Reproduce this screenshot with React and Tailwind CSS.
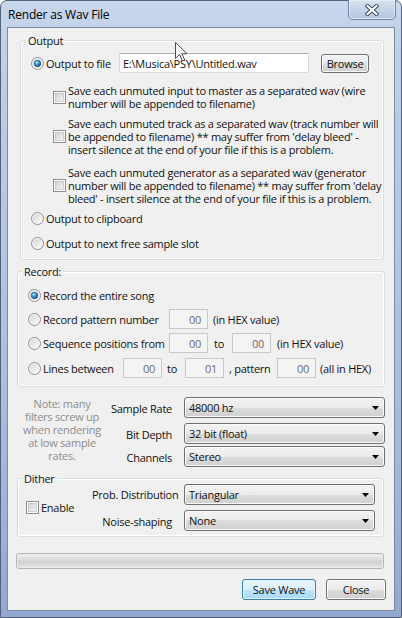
import React from "react";

function Radio({ checked }) {
  return (
    <svg width="13" height="13" viewBox="0 0 13 13" className="shrink-0 block">
      <defs>
        <linearGradient id="rbg" x1="0" y1="0" x2="1" y2="1">
          <stop offset="0" stopColor="#d6d6d6" />
          <stop offset="1" stopColor="#fcfcfc" />
        </linearGradient>
        <radialGradient id="rdot" cx="0.4" cy="0.35" r="0.7">
          <stop offset="0" stopColor="#b5e6ff" />
          <stop offset="0.45" stopColor="#3d97dc" />
          <stop offset="1" stopColor="#173f6b" />
        </radialGradient>
      </defs>
      <circle cx="6.5" cy="6.5" r="6" fill="#f6f6f6" stroke="#8e8f8f" strokeWidth="1" />
      <circle cx="6.5" cy="6.5" r="4.6" fill="url(#rbg)" />
      {checked && <circle cx="6.5" cy="6.5" r="3.3" fill="url(#rdot)" stroke="#1c4f80" strokeWidth="0.6" />}
    </svg>
  );
}

function Check() {
  return (
    <svg width="13" height="13" viewBox="0 0 13 13" className="shrink-0 block">
      <defs>
        <linearGradient id="cbg" x1="0" y1="0" x2="1" y2="1">
          <stop offset="0" stopColor="#cbcfd5" />
          <stop offset="1" stopColor="#f7f7f7" />
        </linearGradient>
      </defs>
      <rect x="0.5" y="0.5" width="12" height="12" fill="#ffffff" stroke="#8e8f8f" />
      <rect x="2.5" y="2.5" width="8" height="8" fill="url(#cbg)" stroke="#aeb3b9" strokeWidth="0.6" />
    </svg>
  );
}

function Combo({ value, className }) {
  return (
    <div
      className={
        "flex items-center h-[21px] rounded-[3px] border border-[#707070] bg-[linear-gradient(#f3f3f3_0%,#ebebeb_50%,#dddddd_50%,#d0d0d0_100%)] shadow-[inset_0_0_0_1px_#fbfbfb] pl-[4px] pr-[5px] " +
        className
      }
    >
      <span className="flex-1 whitespace-nowrap">{value}</span>
      <svg width="7" height="4" viewBox="0 0 7 4" className="block">
        <path d="M0 0H7L3.5 4Z" fill="#000" />
      </svg>
    </div>
  );
}

function Btn({ children, className, def }) {
  return (
    <div
      className={
        "flex items-center justify-center rounded-[3px] border whitespace-nowrap " +
        (def
          ? "border-[#3c7fb1] bg-[linear-gradient(#eaf6fd_0%,#d9f0fc_50%,#bee6fd_50%,#a7d9f5_100%)] shadow-[inset_0_0_0_1px_#e6f5fd] "
          : "border-[#707070] bg-[linear-gradient(#f2f2f2_0%,#ebebeb_50%,#dddddd_50%,#cfcfcf_100%)] shadow-[inset_0_0_0_1px_#fbfbfb] ") +
        className
      }
    >
      {children}
    </div>
  );
}

function Hex({ value, className }) {
  return (
    <div
      className={
        "h-[20px] w-[39px] border border-[#c9c9c9] bg-[#f4f4f4] flex items-center justify-end pr-[6px] text-[#6d6d6d] " +
        (className || "")
      }
    >
      {value}
    </div>
  );
}

function Group({ label, labelLeft, className, children }) {
  return (
    <div
      className={
        "relative rounded-[3px] border border-[#d5dfe5] shadow-[inset_0_0_0_1px_#ffffff] " + className
      }
    >
      <span className={"absolute -top-[7px] px-[2px] bg-[#f0f0f0] leading-[13px] " + labelLeft}>{label}</span>
      {children}
    </div>
  );
}

function CloseX() {
  return (
    <div className="-mt-[1px] mr-[5px] w-[48px] h-[20px] rounded-b-[5px] border border-t-0 border-[#6f83a6] bg-[linear-gradient(#d9e3f1_0%,#c6d3e7_50%,#b4c5df_100%)] shadow-[inset_0_0_0_1px_#e4ebf5] flex items-center justify-center">
      <svg width="14" height="12" viewBox="0 0 14 12" className="block">
        <path d="M2.5 2 L11.5 10 M11.5 2 L2.5 10" stroke="#3a4659" strokeWidth="4" strokeLinecap="square" />
        <path d="M2.5 2 L11.5 10 M11.5 2 L2.5 10" stroke="#ffffff" strokeWidth="2.2" strokeLinecap="square" />
      </svg>
    </div>
  );
}

function Cursor() {
  return (
    <svg width="14" height="22" viewBox="0 0 14 22" className="absolute left-[175px] top-[42px] block">
      <path
        d="M0.5 0.5 L0.5 16.5 L4.5 12.5 L7.5 19 L9.8 18 L6.8 11.8 L12 11.8 Z"
        fill="#f7f7f7"
        stroke="#4a4a4a"
        strokeWidth="1"
        strokeLinejoin="round"
      />
    </svg>
  );
}

const NOTE = ["Note: many", "filters screw up", "when rendering", "at low sample", "rates."];

export default function App() {
  return (
    <div className="relative w-[402px] h-[618px] bg-white font-['Open_Sans','Noto_Sans',sans-serif] text-[11px] tracking-[-0.25px] leading-[13px] text-[#111]">
      <div className="w-[402px] h-[618px] flex flex-col rounded-t-[7px] border border-[#52637b] bg-[linear-gradient(180deg,#c8d7ec_0%,#bfcfe7_8%,#b3c6e2_40%,#a3b8db_75%,#91a8d1_100%)]">
        {/* Title bar */}
        <div className="h-[26px] shrink-0 flex items-start justify-between">
          <div className="pl-[7px] pt-[6px] text-[12px] tracking-[-0.2px] leading-[16px] text-black">Render as Wav File</div>
          <CloseX />
        </div>

        {/* Client area */}
        <div className="flex-1 mx-[6px] mb-[6px] border border-[#7b8aa1] bg-[#f0f0f0] flex flex-col">
          {/* Output group */}
          <Group label="Output" labelLeft="left-[5px]" className="ml-[12px] mt-[12px] w-[364px] h-[220px] flex flex-col pl-[10px] pt-[12px]">
            <div className="flex items-center h-[20px]">
              <Radio checked />
              <span className="ml-[2px] w-[73px] whitespace-nowrap">Output to file</span>
              <div className="w-[190px] h-[20px] bg-white border border-[#d6dbe2] border-t-[#abadb3] flex items-center pl-[3px] whitespace-nowrap">
                {"E:\\Musica\\PSY\\Untitled.wav"}
              </div>
              <Btn className="ml-[12px] w-[48px] h-[19px]">Browse</Btn>
            </div>

            <div className="flex items-center ml-[22px] mt-[11px]">
              <Check />
              <span className="ml-[2px] whitespace-nowrap">
                Save each unmuted input to master as a separated wav (wire
                <br />
                number will be appended to filename)
              </span>
            </div>

            <div className="flex items-center ml-[22px] mt-[7px]">
              <Check />
              <span className="ml-[2px] whitespace-nowrap">
                Save each unmuted track as a separated wav (track number will
                <br />
                be appended to filename) ** may suffer from 'delay bleed' -
                <br />
                insert silence at the end of your file if this is a problem.
              </span>
            </div>

            <div className="flex items-center ml-[22px] mt-[10px]">
              <Check />
              <span className="ml-[2px] whitespace-nowrap">
                Save each unmuted generator as a separated wav (generator
                <br />
                number will be appended to filename) ** may suffer from 'delay
                <br />
                bleed' - insert silence at the end of your file if this is a problem.
              </span>
            </div>

            <div className="flex items-center h-[14px] mt-[6px]">
              <Radio />
              <span className="ml-[2px]">Output to clipboard</span>
            </div>
            <div className="flex items-center h-[14px] mt-[11px]">
              <Radio />
              <span className="ml-[2px]">Output to next free sample slot</span>
            </div>
          </Group>

          {/* Record group */}
          <Group label="Record:" labelLeft="left-[4px]" className="ml-[9px] mt-[11px] w-[368px] h-[116px] flex flex-col pl-[10px] pt-[13px]">
            <div className="flex items-center h-[20px]">
              <Radio checked />
              <span className="ml-[2px]">Record the entire song</span>
            </div>
            <div className="flex items-center h-[20px] mt-[4px]">
              <Radio />
              <span className="ml-[2px] w-[126px] whitespace-nowrap">Record pattern number</span>
              <Hex value="00" />
              <span className="ml-[5px]">(in HEX value)</span>
            </div>
            <div className="flex items-center h-[20px] mt-[4px]">
              <Radio />
              <span className="ml-[2px] w-[126px] whitespace-nowrap">Sequence positions from</span>
              <Hex value="00" />
              <span className="w-[24px] pl-[6px]">to</span>
              <Hex value="00" />
              <span className="ml-[6px]">(in HEX value)</span>
            </div>
            <div className="flex items-center h-[20px] mt-[5px]">
              <Radio />
              <span className="ml-[2px] w-[80px] whitespace-nowrap">Lines between</span>
              <Hex value="00" />
              <span className="w-[23px] pl-[5px]">to</span>
              <Hex value="01" />
              <span className="w-[53px] pl-[5px] whitespace-nowrap">, pattern</span>
              <Hex value="00" />
              <span className="ml-[4px] whitespace-nowrap">(all in HEX)</span>
            </div>
          </Group>

          {/* Format section */}
          <div className="flex mt-[10px] h-[70px]">
            <div className="ml-[10px] w-[88px] flex flex-col items-center text-[#8d8d8d]">
              {NOTE.map((l) => (
                <div key={l} className="h-[13px] leading-[13px] whitespace-nowrap">
                  {l}
                </div>
              ))}
            </div>
            <div className="flex flex-col">
              <div className="flex items-start">
                <span className="w-[66px] text-right pt-[5px] whitespace-nowrap">Sample Rate</span>
                <Combo value="48000 hz" className="ml-[12px] w-[201px]" />
              </div>
              <div className="flex items-start mt-[5px]">
                <span className="w-[66px] text-right pt-[5px] whitespace-nowrap">Bit Depth</span>
                <Combo value="32 bit (float)" className="ml-[12px] w-[201px]" />
              </div>
              <div className="flex items-start mt-[2px]">
                <span className="w-[66px] text-right pt-[5px] whitespace-nowrap">Channels</span>
                <Combo value="Stereo" className="ml-[12px] w-[201px]" />
              </div>
            </div>
          </div>

          {/* Dither group */}
          <Group label="Dither" labelLeft="left-[4px]" className="ml-[9px] mt-[11px] w-[367px] h-[59px] flex items-center pl-[8px]">
            <div className="w-[66px] flex items-center">
              <Check />
              <span className="ml-[2px]">Enable</span>
            </div>
            <div className="flex flex-col">
              <div className="flex items-start">
                <span className="w-[80px] text-right pt-[4px] whitespace-nowrap">Prob. Distribution</span>
                <Combo value="Triangular" className="ml-[12px] w-[191px]" />
              </div>
              <div className="flex items-start mt-[5px]">
                <span className="w-[80px] text-right pt-[5px] whitespace-nowrap">Noise-shaping</span>
                <Combo value="None" className="ml-[12px] w-[191px]" />
              </div>
            </div>
          </Group>

          {/* Progress bar */}
          <div className="ml-[8px] mt-[16px] w-[368px] h-[16px] rounded-[3px] border border-[#b4b4b4] bg-[linear-gradient(#f2f2f2_0%,#e0e0e0_30%,#d2d2d2_60%,#e4e4e4_100%)] shadow-[inset_0_0_0_1px_#ececec]" />

          {/* Buttons */}
          <div className="flex justify-end gap-[10px] pr-[8px] mt-[10px]">
            <Btn def className="w-[74px] h-[21px]">Save Wave</Btn>
            <Btn className="w-[60px] h-[21px]">Close</Btn>
          </div>
        </div>
      </div>
      <Cursor />
    </div>
  );
}
